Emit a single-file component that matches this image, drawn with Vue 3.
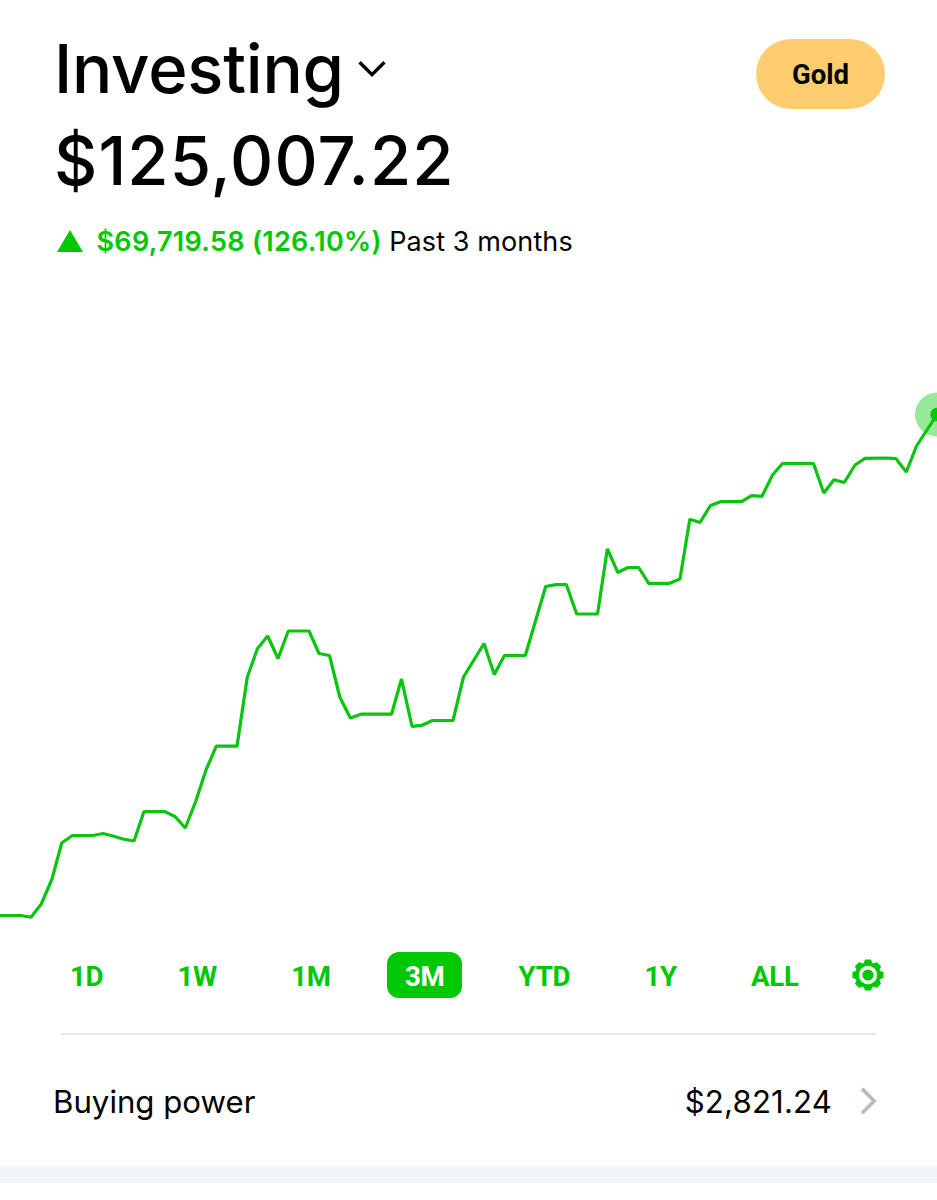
<template>
  <main class="screen">
    <header class="top">
      <div class="heading">
        <h1 class="title">
          <span class="title-text">Investing</span>
          <svg class="caret" width="28" height="18" viewBox="0 0 28 18">
            <path d="M1.6 2.2 14 14.6 26.4 2.2" fill="none" stroke="#000" stroke-width="3.4" />
          </svg>
        </h1>
        <div class="balance">$125,007.22</div>
      </div>
      <button class="gold">Gold</button>
    </header>

    <div class="change">
      <svg class="up" width="26" height="22" viewBox="0 0 26 22">
        <path d="M13 0 26 22H0z" fill="#00c805" />
      </svg>
      <span class="gain">$69,719.58 (126.10%)</span>
      <span class="period">Past 3 months</span>
    </div>

    <svg class="chart" width="937" height="560" viewBox="0 380 937 560">
      <circle :cx="last[0]" :cy="last[1]" r="22" fill="#99e99b" />
      <polyline :points="line" fill="none" stroke="#0bc410" stroke-width="3.2" stroke-linejoin="bevel" />
      <circle :cx="last[0]" :cy="last[1]" r="6.7" fill="#00c805" />
    </svg>

    <nav class="ranges">
      <button
        v-for="r in ranges"
        :key="r"
        class="range"
        :class="{ active: r === selected }"
        @click="selected = r"
      >{{ r }}</button>
      <button class="settings">
        <svg width="32" height="32" viewBox="-16 -16 32 32">
          <path
            v-for="a in teeth"
            :key="a"
            d="M-4.6-11-3-15.5H3L4.6-11z"
            :transform="`rotate(${a})`"
            fill="#00c805"
          />
          <circle r="11" fill="none" stroke="#00c805" stroke-width="3.6" />
          <circle r="5.6" fill="#00c805" />
        </svg>
      </button>
    </nav>

    <hr class="divider">

    <div class="power">
      <span class="power-label">Buying power</span>
      <span class="power-value">$2,821.24</span>
      <svg class="chevron" width="18" height="28" viewBox="0 0 18 28">
        <path d="M2 1.8 14.2 14 2 26.2" fill="none" stroke="#b3bcc2" stroke-width="3.6" />
      </svg>
    </div>

    <div class="band"></div>
  </main>
</template>

<script setup>
import { ref, computed } from 'vue'

const ranges = ['1D', '1W', '1M', '3M', 'YTD', '1Y', 'ALL']
const selected = ref('3M')
const teeth = [0, 45, 90, 135, 180, 225, 270, 315]

const points = [
  [0,915.5],[21,915.5],[31,917.3],[41.3,904],[52,879],[61.7,843],[72,835.7],[93,835.5],
  [103,833.5],[113,836],[123,839],[134,841],[144,811.5],[165,811.7],[175,816.5],[185.3,828],
  [196,800.5],[206,770],[216.3,746.2],[237,746.2],[247.3,677],[257.5,648.5],[267.7,636],[278,658.5],
  [288.3,631],[309,631],[319,653.5],[329.5,655.5],[339.8,697],[350.3,718],[361,714.2],[391.5,714.2],
  [401.5,679],[412,726.3],[422,725.3],[432.5,720.5],[453,720.5],[463.5,677],[484,643.5],[494.3,674.5],
  [504.5,655.5],[525.3,655.5],[545.7,586.5],[556,584.7],[566.3,584.5],[576.7,614],[597.5,614],[607.4,548.8],
  [617.8,572.5],[628,567.5],[638.7,567.5],[648.7,583.3],[669.5,583.3],[680,579],[689.8,519.3],[700,522.5],
  [710.5,505.5],[720.5,501.7],[741.5,501.7],[751.7,495.7],[762,496.3],[772.5,475],[782.5,463.5],[813.5,463.5],
  [823.8,493],[834,479.7],[844.3,482.5],[855,465],[865,458.3],[886,458],[896,458.7],[906.3,472],
  [916.5,446],[937,414.5],
]

const last = points[points.length - 1]
const line = computed(() => points.map(p => p.join(',')).join(' '))
</script>

<style>
body { background: #fff; }
</style>

<style scoped>
.screen {
  width: 937px;
  height: 1200px;
  overflow: hidden;
  display: flex;
  flex-direction: column;
  background: #fff;
  color: #000;
  font-family: Inter, "Liberation Sans", sans-serif;
  white-space: nowrap;
}
button {
  padding: 0;
  border: 0;
  background: none;
  font: inherit;
  color: inherit;
}
.top {
  display: flex;
  justify-content: space-between;
  align-items: flex-start;
  padding: 23px 52px 0 54px;
  height: 200px;
  box-sizing: border-box;
}
.title {
  display: flex;
  align-items: center;
  gap: 14px;
  margin: 0;
  height: 92px;
  font-size: 67px;
  line-height: 92px;
  font-weight: 500;
  letter-spacing: -0.2px;
}
.balance {
  height: 92px;
  font-size: 67px;
  line-height: 92px;
  font-weight: 500;
  letter-spacing: 1.1px;
}
.gold {
  margin-top: 16px;
  width: 129px;
  height: 70px;
  border-radius: 35px;
  background: #ffcd70;
  font-family: Roboto, sans-serif;
  font-size: 27.5px;
  font-weight: 700;
}
.change {
  display: flex;
  align-items: center;
  height: 40px;
  margin-top: 21px;
  padding-left: 57px;
  font-size: 27px;
}
.gain {
  margin-left: 13.5px;
  color: #00c805;
  font-weight: 600;
  letter-spacing: 0.28px;
}
.period {
  margin-left: 7.5px;
  letter-spacing: 0.1px;
}
.chart {
  display: block;
  flex: none;
  margin-top: 119px;
}
.ranges {
  display: flex;
  align-items: center;
  justify-content: space-between;
  height: 46px;
  margin-top: 12px;
  padding: 0 53px 0 52px;
}
.range {
  height: 46px;
  padding: 2px 18px 0;
  border-radius: 12px;
  color: #00c805;
  font-family: Roboto, sans-serif;
  font-size: 27.7px;
  font-weight: 700;
  letter-spacing: -0.3px;
}
.range.active {
  background: #00c805;
  color: #fff;
}
.settings {
  width: 32px;
  height: 32px;
  margin-left: -3px;
}
.settings svg { display: block; }
.divider {
  flex: none;
  width: 815px;
  height: 2px;
  margin: 35px 61px 0;
  border: 0;
  background: #e3e6e9;
}
.power {
  display: flex;
  align-items: center;
  height: 131px;
  padding: 0 59px 0 53px;
  font-size: 31.2px;
}
.power-label,
.power-value { padding-top: 2px; }
.power-value {
  margin-left: auto;
  letter-spacing: 0.15px;
}
.chevron { margin-left: 28px; }
.band {
  height: 17px;
  background: #f3f6f9;
}
</style>
